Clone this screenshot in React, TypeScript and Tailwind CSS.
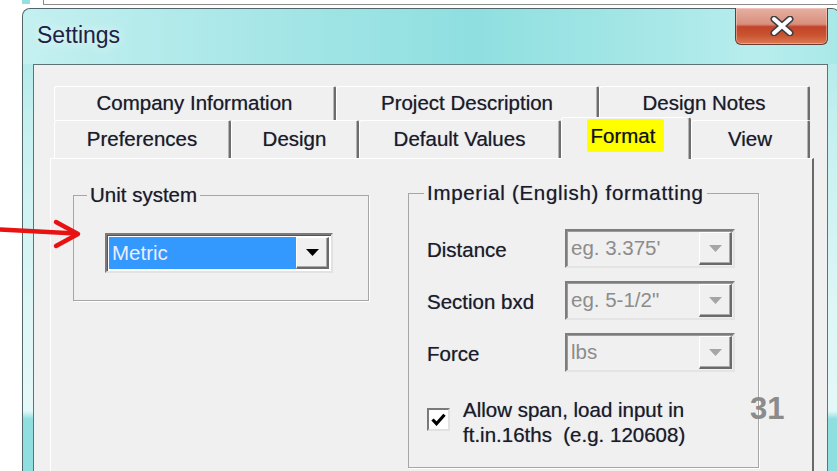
import React from 'react';

type TabSpec = { label: string; w: string };

const backRow: TabSpec[] = [
  { label: 'Company Information', w: 'w-[282px]' },
  { label: 'Project Description', w: 'w-[263px]' },
  { label: 'Design Notes', w: 'w-[211px]' },
];

const Tab = ({ label, w, h }: TabSpec & { h: string }) => (
  <div
    className={`${w} ${h} flex shrink-0 items-center justify-center rounded-tl-[3px] rounded-tr-[2px] border-l border-t border-r-2 border-white border-r-[#6d6d6d] bg-[#f0f0f0] pb-[1px] shadow-[inset_-1px_0_0_#b4b4b4]`}
  >
    {label}
  </div>
);

const Arrow = ({ disabled }: { disabled?: boolean }) => (
  <div className="flex h-full w-[33px] shrink-0 items-center justify-center border-l border-t border-r-2 border-b-2 border-white border-r-[#6a6a6a] border-b-[#6a6a6a] bg-[#f0f0f0] shadow-[inset_-1px_-1px_0_#a9a9a9]">
    <svg width="13" height="7" viewBox="0 0 13 7">
      <path d="M0 0h13L6.5 7z" fill={disabled ? '#a5a5a5' : '#000'} />
    </svg>
  </div>
);

const DisabledCombo = ({ value }: { value: string }) => (
  <div className="flex h-[39px] w-[170px] border-2 border-t-[#7d7d7d] border-l-[#7d7d7d] border-b-[#e4e4e4] border-r-[#e4e4e4] shadow-[inset_1px_1px_0_#9a9a9a]">
    <div className="flex flex-1 items-center pl-[4px] text-[#8c8c8c] [text-shadow:none]">{value}</div>
    <div className="py-[1px] pr-[1px]">
      <Arrow disabled />
    </div>
  </div>
);

const Field = ({ label, value }: { label: string; value: string }) => (
  <div className="flex items-center">
    <span className="w-[138px] pt-[4px]">{label}</span>
    <DisabledCombo value={value} />
  </div>
);

export default function App() {
  return (
    <div className="relative h-[471px] w-[837px] overflow-hidden bg-white font-['Liberation_Sans',Arial,sans-serif] text-[20.5px] text-[#1b1b2c] [text-shadow:0_0_0.7px_rgba(20,20,40,0.55)]">
      {/* window behind the dialog */}
      <div className="flex h-[8px]">
        <div className="w-[22px]" />
        <div className="h-[4px] w-[8px] bg-[#93e0e1]" />
        <div className="w-[13px]" />
        <div className="h-[5px] flex-1 border-b border-l border-[#8c8c8c]" />
      </div>

      {/* dialog frame */}
      <div className="ml-[22px] flex h-[463px] w-[818px] flex-col rounded-t-[8px] border border-b-0 border-[#52656a] bg-[linear-gradient(180deg,#a9e7e8_0px,#c6f0f0_120px,#def6f6_300px,#e4f8f8_402px,#8fdfe0_410px)]">
        <div className="flex h-[55px] shrink-0 rounded-t-[8px] bg-[linear-gradient(90deg,#c4f0f0_0%,#a6e6e7_30%,#8fdfe0_55%,#a4e6e6_75%,#b8eded_90%,#a9e8e8_100%)]">
          <span className="ml-[14px] self-center pb-[2px] text-[23px] text-[#1d2245] [text-shadow:0_0_12px_rgba(255,255,255,0.95)]">
            Settings
          </span>
          <div className="relative ml-auto mr-[11px] -mt-px flex h-[37px] w-[93px] items-center justify-center rounded-b-[6px] border border-t-0 border-[#6b3b33] bg-[linear-gradient(180deg,#e6b0a2_0%,#d88f7c_45%,#c2442b_52%,#c9532f_75%,#dc7a55_100%)] shadow-[inset_0_0_0_1px_rgba(255,220,210,0.45)]">
            <svg width="26" height="20" viewBox="0 0 26 20">
              <path d="M5 3l16 14M21 3L5 17" stroke="#3e3e44" strokeWidth="7" strokeLinecap="round" />
              <path d="M5 3l16 14M21 3L5 17" stroke="#ffffff" strokeWidth="4" strokeLinecap="round" />
            </svg>
          </div>
        </div>

        {/* client area */}
        <div className="ml-[10px] w-[795px] flex-1 border border-b-0 border-[#5f7377] bg-[#f0f0f0] pl-[16px] pt-[21px]">
          <div className="w-[764px]">
            <div className="pl-[4px]">
              <div className="flex h-[34px]">
                {backRow.map((t) => (
                  <Tab key={t.label} {...t} h="h-[34px]" />
                ))}
              </div>
              <div className="relative z-10 flex h-[38px] items-end">
                <Tab label="Preferences" w="w-[177px]" h="h-[38px]" />
                <Tab label="Design" w="w-[128px]" h="h-[38px]" />
                <Tab label="Default Values" w="w-[202px]" h="h-[38px]" />
                <div className="flex h-[42px] w-[130px] shrink-0 translate-y-[1px] items-start justify-center rounded-t-[3px] border-l border-t border-r-2 border-white border-r-[#6d6d6d] bg-[#f0f0f0] pt-[1px] shadow-[inset_-1px_0_0_#b4b4b4]">
                  <span className="rounded-[2px] bg-[#ffff00] pl-[4px] pr-[9px] leading-[33px] text-[#111]">Format</span>
                </div>
                <Tab label="View" w="w-[119px]" h="h-[38px]" />
              </div>
            </div>

            {/* Format page */}
            <div className="flex h-[320px] items-start border-l border-t border-r-2 border-white border-r-[#696969] pl-[22px] pt-[22px]">
              <fieldset className="mt-[2px] h-[118px] w-[296px] border border-[#a6a6a6] shadow-[1px_1px_0_#fff]">
                <legend className="ml-[13px] px-[3px] leading-[24px]">Unit system</legend>
                <div className="pl-[31px] pt-[26px]">
                  <div className="flex h-[40px] w-[228px] border-2 border-t-[#7a7a7a] border-l-[#7a7a7a] border-b-[#e2e2e2] border-r-[#e2e2e2] bg-white p-[2px] shadow-[inset_1px_1px_0_#555]">
                    <div className="flex flex-1 items-center bg-[#3399ff] pl-[3px] text-[#eaeeff] [text-shadow:none]">Metric</div>
                    <Arrow />
                  </div>
                </div>
              </fieldset>

              <fieldset className="ml-[39px] h-[287px] w-[351px] border border-[#a6a6a6] shadow-[1px_1px_0_#fff]">
                <legend className="ml-[15px] px-[3px] leading-[24px] tracking-[0.7px]">Imperial (English) formatting</legend>
                <div className="flex flex-col gap-[13px] pl-[18px] pt-[24px]">
                  <Field label="Distance" value="eg. 3.375'" />
                  <Field label="Section bxd" value={'eg. 5-1/2"'} />
                  <Field label="Force" value="lbs" />
                </div>
                <div className="mt-[25px] flex gap-[13px] pl-[18px]">
                  <div className="mt-[11px] flex h-[23px] w-[23px] shrink-0 items-center justify-center border-2 border-t-[#7a7a7a] border-l-[#7a7a7a] border-b-[#e2e2e2] border-r-[#e2e2e2] bg-white">
                    <svg width="15" height="13" viewBox="0 0 15 13">
                      <path d="M1.5 6.5l4 4.2L13.5 1.8" fill="none" stroke="#000" strokeWidth="3.2" />
                    </svg>
                  </div>
                  <div className="leading-[25px]">
                    <div>Allow span, load input in</div>
                    <div className="whitespace-pre">ft.in.16ths  (e.g. 120608)</div>
                  </div>
                </div>
              </fieldset>
            </div>
          </div>
        </div>
      </div>

      {/* annotation arrow */}
      <svg className="absolute left-0 top-[215px]" width="90" height="40" viewBox="0 0 90 40">
        <path d="M0 14.5L76 18.5" stroke="#e81212" strokeWidth="4.5" strokeLinecap="round" />
        <path d="M56 7L78 19L56 31" fill="none" stroke="#e81212" strokeWidth="4.5" strokeLinecap="round" strokeLinejoin="round" />
      </svg>

      <span className="absolute left-[750px] top-[386px] text-[31px] font-bold text-[#8b8b8b] [text-shadow:none]">31</span>
    </div>
  );
}
